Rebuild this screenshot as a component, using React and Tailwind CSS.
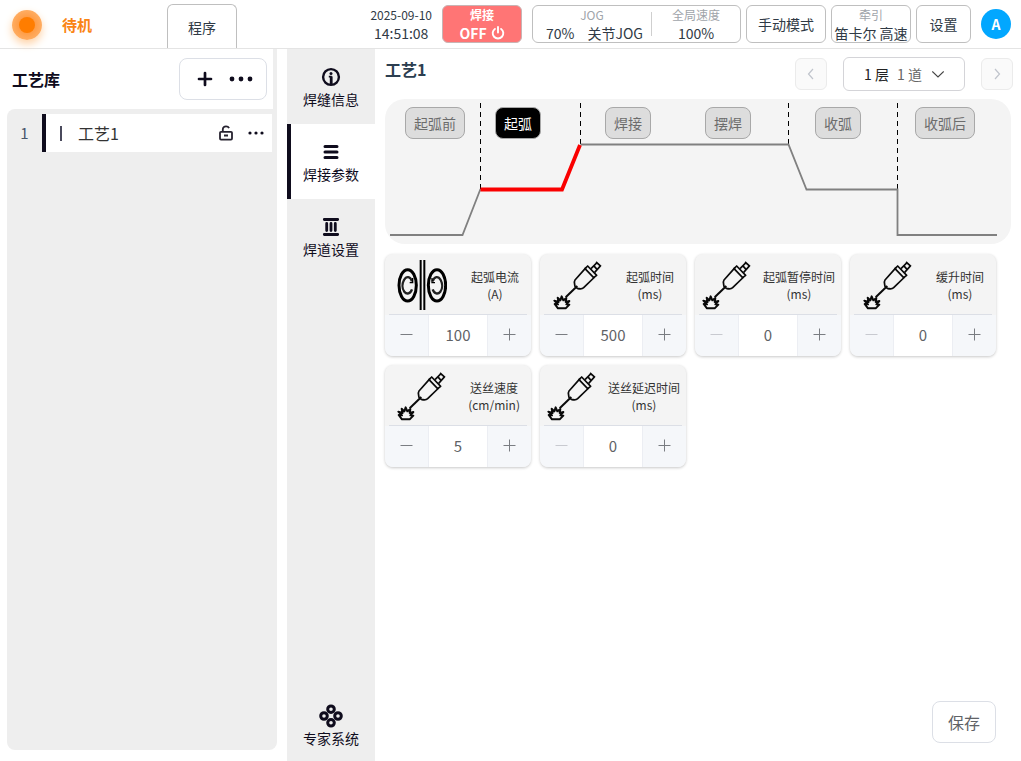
import React, { useState } from "react";

const FONT = "font-['Noto_Sans_CJK_SC',sans-serif]";

const STAGES = ["起弧前", "起弧", "焊接", "摆焊", "收弧", "收弧后"];

const PARAMS = [
	{ id: "current", name: "起弧电流", unit: "(A)", value: 100, icon: "current" },
	{ id: "time", name: "起弧时间", unit: "(ms)", value: 500, icon: "torch" },
	{ id: "pause", name: "起弧暂停时间", unit: "(ms)", value: 0, icon: "torch" },
	{ id: "rise", name: "缓升时间", unit: "(ms)", value: 0, icon: "torch" },
	{ id: "feed", name: "送丝速度", unit: "(cm/min)", value: 5, icon: "torch" },
	{ id: "delay", name: "送丝延迟时间", unit: "(ms)", value: 0, icon: "torch" },
];

function PowerIcon() {
	return (
		<svg viewBox="0 0 14 14" className="size-[14px]" fill="none" stroke="currentColor" strokeWidth="1.9" strokeLinecap="round">
			<path d="M7 1v5.500M3.900 2.900a5.300 5.300 0 1 0 6.200 0" />
		</svg>
	);
}

function DotsIcon({ className }) {
	return (
		<svg viewBox="0 0 24 6" className={className} fill="currentColor">
			<circle cx="3" cy="3" r="2.4" />
			<circle cx="12" cy="3" r="2.4" />
			<circle cx="21" cy="3" r="2.4" />
		</svg>
	);
}

function PlusIcon() {
	return (
		<svg viewBox="0 0 16 16" className="size-4" stroke="currentColor" strokeWidth="2.7" strokeLinecap="round">
			<path d="M8 2v12M2 8h12" />
		</svg>
	);
}

function LockIcon() {
	return (
		<svg viewBox="0 0 16 16" className="size-4" fill="none" stroke="currentColor" strokeWidth="1.8">
			<rect x="2" y="6.800" width="12" height="7.800" rx="1" />
			<path d="M4.800 6.800V4.500a3.200 3.200 0 0 1 3.200-3.200c1.400 0 2.500.600 3.100 1.800M6 10.500h4" />
		</svg>
	);
}

function InfoIcon() {
	return (
		<svg viewBox="0 0 20 20" className="size-5" fill="none" stroke="currentColor">
			<circle cx="10" cy="10" r="7.9" strokeWidth="2.4" />
			<circle cx="10" cy="6.4" r="1.5" fill="currentColor" stroke="none" />
			<path d="M7.8 9.6H10V18" strokeWidth="1.6" />
			<path d="M10.2 9.4V18" strokeWidth="2.8" />
		</svg>
	);
}

function ListIcon() {
	return (
		<svg viewBox="0 0 20 20" className="size-5" stroke="currentColor" strokeWidth="3" strokeLinecap="round">
			<path d="M4 4.4h12M4 10h12M4 15.6h12" />
		</svg>
	);
}

function ColumnsIcon() {
	return (
		<svg viewBox="0 0 20 20" className="size-5" stroke="currentColor" strokeLinecap="round">
			<path d="M3.3 2.5h13.4M3.3 17.5h13.4" strokeWidth="2.8" />
			<path d="M5.700 6.400v7.200M10 6.400v7.200M14.300 6.400v7.200" strokeWidth="2.8" />
		</svg>
	);
}

function ExpertIcon() {
	return (
		<svg viewBox="0 0 24 24" className="size-6" fill="none" stroke="currentColor" strokeWidth="3">
			<circle cx="12" cy="5.200" r="3.300" />
			<circle cx="5" cy="12" r="3.300" />
			<circle cx="19" cy="12" r="3.300" />
			<circle cx="12" cy="18.800" r="3.300" />
		</svg>
	);
}

function CurrentIcon() {
	return (
		<svg viewBox="0 0 150 150" className="size-[50px] shrink-0" fill="none" stroke="#000">
			<ellipse cx="32" cy="76" rx="26" ry="47" strokeWidth="9" />
			<path d="M45 64C40 48 28 48 21 60c-6 11-6 26 1 35 7 9 18 7 23-7" strokeWidth="7" stroke="#222" />
			<path d="M38 68h9V54" strokeWidth="4" />
			<path d="M71 0v150M82 0v150" strokeWidth="6" />
			<ellipse cx="120" cy="76" rx="26" ry="47" strokeWidth="9" />
			<path d="M107 64c5-16 17-16 24-4 6 11 6 26-1 35-7 9-18 7-23-7" strokeWidth="7" stroke="#222" />
			<path d="M114 68h-9V54" strokeWidth="4" />
		</svg>
	);
}

function TorchIcon() {
	return (
		<svg viewBox="0 0 150 150" className="size-[50px] shrink-0" fill="none" stroke="#0a0a0a" strokeWidth="5" strokeLinejoin="round">
			<path d="M117 26l18-18M128 37l18-20M132 6l15 13M125 17l10 11" />
			<path d="M107 18l27 28-9 7-26-27z" />
			<path d="M102 23L69 60c-4 5-1 12 0 19l7 6c7 2 14 3 19-2l33-32" />
			<path d="M76 78l-35 34" strokeWidth="6" />
			<path d="M18 145L8 132l10 1-11-11 13 4-3-13 8 8 4-12 5 12 9-7-2 12 11-3-9 10 9 1-11 11z" strokeWidth="6" />
		</svg>
	);
}

function Header() {
	return (
		<header className="flex h-[49px] shrink-0 border-b border-[#e4e4e4] bg-white text-[#303a45]">
			<div className="flex w-[167px] items-center pt-[2px] pl-3">
				<span className="flex size-[30px] items-center justify-center rounded-full bg-radial from-[#ff8a14] to-[#ffbb78] shadow-[0_4px_8px_#ffd2a5]">
					<span className="size-4 rounded-full bg-[#ff7d00]" />
				</span>
				<span className="ml-5 text-[15px] font-bold text-[#fa8514]">待机</span>
			</div>
			<button className="mt-1 w-[70px] rounded-t-md border border-b-0 border-[#bfbfbf] text-sm">程序</button>

			<div className="ml-auto flex items-center pr-[10px]">
				<div className="text-center">
					<div className="text-xs leading-[18px]">2025-09-10</div>
					<div className="text-sm leading-[18px]">14:51:08</div>
				</div>
				<button className="ml-[10px] h-[38px] w-20 rounded-md border border-[#c8b4b4] bg-[#ff7575] font-bold text-white">
					<span className="block text-xs leading-[18px]">焊接</span>
					<span className="flex items-center justify-center gap-1 text-sm leading-[18px]">
						OFF <PowerIcon />
					</span>
				</button>
				<div className="ml-[10px] flex h-[38px] w-[209px] items-center rounded-md border border-[#bfbfbf] text-center">
					<div className="w-[118px]">
						<div className="text-xs leading-[18px] text-[#a0a4aa]">JOG</div>
						<div className="flex justify-end gap-[13px] pr-2 text-sm leading-[18px]">
							<span>70%</span>
							<span>关节JOG</span>
						</div>
					</div>
					<div className="h-6 w-px bg-[#cfcfcf]" />
					<div className="flex-1">
						<div className="text-xs leading-[18px] text-[#a0a4aa]">全局速度</div>
						<div className="text-sm leading-[18px]">100%</div>
					</div>
				</div>
				<button className="ml-[5px] h-[38px] w-20 rounded-md border border-[#bfbfbf] text-sm">手动模式</button>
				<button className="ml-[5px] h-[38px] w-20 rounded-md border border-[#bfbfbf] whitespace-nowrap">
					<span className="block text-xs leading-[18px] text-[#a0a4aa]">牵引</span>
					<span className="flex justify-center text-sm leading-[18px]">笛卡尔 高速</span>
				</button>
				<button className="ml-[5px] h-[38px] w-[55px] rounded-md border border-[#bfbfbf] text-sm">设置</button>
				<button className="ml-[10px] size-[30px] rounded-full bg-[#02a7ff] text-sm font-bold text-white">A</button>
			</div>
		</header>
	);
}

function ProcessLibrary() {
	return (
		<section className="flex w-[277px] shrink-0 flex-col pb-[11px] pl-[7px]">
			<div className="flex h-[60px] items-center justify-between border-r-4 border-[#eeeeee] pr-[6px] pl-[5px]">
				<h2 className="text-base font-bold text-[#0f0c1d]">工艺库</h2>
				<div className="flex h-[42px] w-22 items-center justify-end gap-4 rounded-lg border border-[#dcdfe6] pr-[13px] text-[#0f0c1d]">
					<button aria-label="新增">
						<PlusIcon />
					</button>
					<button aria-label="更多">
						<DotsIcon className="h-[6px] w-6" />
					</button>
				</div>
			</div>
			<ul className="flex-1 rounded-l-lg rounded-br-lg bg-[#eeeeee] pt-[5px] pr-[5px]">
				<li className="flex h-[38px] items-center">
					<span className="w-[35px] text-center text-[15px] text-[#48566a]">1</span>
					<div className="flex h-full flex-1 items-center border-l-4 border-[#0f0c1d] bg-white pr-2 pl-[14px]">
						<span className="h-[15px] w-[2px] bg-[#4a4a5c]" />
						<span className="ml-4 flex-1 text-base text-[#333]">工艺1</span>
						<button aria-label="解锁" className="text-[#26222f]">
							<LockIcon />
						</button>
						<button aria-label="更多" className="ml-[14px] text-[#0f0c1d]">
							<DotsIcon className="h-1 w-4" />
						</button>
					</div>
				</li>
			</ul>
		</section>
	);
}

function NavItem({ icon, label, active, last }) {
	return (
		<button
			className={
				"flex w-full flex-col items-center justify-center border-x-4 pt-px text-sm leading-5 text-[#0f0c1d] " +
				(last ? "mt-auto h-[71px] " : "h-[75px] ") +
				(active ? "border-l-[#0f0c1d] border-r-white bg-white" : "border-transparent")
			}
		>
			<span className="flex size-6 items-center justify-center">{icon}</span>
			<span>{label}</span>
		</button>
	);
}

function SideNav() {
	return (
		<nav className="ml-[10px] flex w-[88px] shrink-0 flex-col bg-[#eeeeee]">
			<NavItem icon={<InfoIcon />} label="焊缝信息" />
			<NavItem icon={<ListIcon />} label="焊接参数" active />
			<NavItem icon={<ColumnsIcon />} label="焊道设置" />
			<NavItem icon={<ExpertIcon />} label="专家系统" last />
		</nav>
	);
}

function StageChart() {
	const [stage, setStage] = useState(1);

	return (
		<div className="relative mt-2 h-[145px] rounded-[20px] bg-[#f4f4f4]">
			<svg viewBox="0 0 626 145" className="absolute inset-0 h-[145px] w-[626px]" fill="none">
				<path d="M95.5 4v86M195.5 4v41M403.5 4v41M512.5 4v86" stroke="#000" strokeWidth="1" strokeDasharray="5 4" />
				<path d="M5 136H77.500L95.500 90M195.500 45.500H403.500L421.500 90.500H512.500V136H612" stroke="#808080" strokeWidth="1.8" />
				<path d="M95.500 90.500H177L195 46" stroke="#fa0000" strokeWidth="3.800" />
			</svg>
			<div className="relative grid grid-cols-[90px_110px_100px_110px_100px_1fr] pt-2 pl-5">
				{STAGES.map((name, i) => (
					<div key={name}>
						<button
							onClick={() => setStage(i)}
							className={
								"h-8 rounded-lg border border-[#a8a8a8] px-2 text-sm " +
								(stage === i ? "bg-black text-white" : "bg-[#dddddd] text-[#6c6c6c]")
							}
						>
							{name}
						</button>
					</div>
				))}
			</div>
		</div>
	);
}

function StepButton({ label, plus, disabled, onClick }) {
	return (
		<button
			aria-label={label}
			disabled={disabled}
			onClick={onClick}
			className="flex w-[43px] items-center justify-center bg-[#f5f7fa] pb-[2px] text-[#7a7d82] disabled:text-[#c8cad0]"
		>
			<svg viewBox="0 0 13 13" className="size-[13px]" stroke="currentColor">
				<path d={plus ? "M6.500 0.500v12M0.500 6.500h12" : "M0.500 6.500h12"} />
			</svg>
		</button>
	);
}

function ParamCard({ param }) {
	const [value, setValue] = useState(param.value);

	return (
		<div className="w-[146px] overflow-hidden rounded-lg bg-[#f4f4f4] shadow-[0_1px_3px_rgba(0,0,0,0.22)]">
			<div className="flex h-[60px] items-center justify-around pt-[2px]">
				{param.icon === "torch" ? <TorchIcon /> : <CurrentIcon />}
				<label htmlFor={param.id} className="text-center text-xs leading-[17px] text-[#333]">
					{param.name}
					<br />
					{param.unit}
				</label>
			</div>
			<div className="mx-1 border-t border-[#dcdfe6]" />
			<div className="flex h-[41px]">
				<StepButton label="减少" disabled={value <= 0} onClick={() => setValue(value - 1)} />
				<input
					id={param.id}
					value={value}
					onChange={(e) => setValue(Number(e.target.value) || 0)}
					className="w-0 flex-1 border-x border-[#eceef3] bg-white text-center text-[15px] text-[#606266] outline-none"
				/>
				<StepButton label="增加" plus onClick={() => setValue(value + 1)} />
			</div>
		</div>
	);
}

function PageButton({ label, path }) {
	return (
		<button
			aria-label={label}
			className="flex size-8 items-center justify-center rounded-md border border-[#ebebeb] bg-[#fafafa] text-[#c0c4cc]"
		>
			<svg viewBox="0 0 12 12" className="size-3" fill="none" stroke="currentColor" strokeWidth="1.2">
				<path d={path} />
			</svg>
		</button>
	);
}

function WeldParams() {
	return (
		<main className="flex flex-1 flex-col pt-2 pl-[10px]">
			<div className="flex h-[34px] items-center pr-2">
				<h1 className="flex-1 self-start text-base leading-6 font-bold text-[#2c3e50]">工艺1</h1>
				<PageButton label="上一道" path="M8 1L3.500 6 8 11" />
				<div className="mx-4 flex h-[34px] w-[122px] items-center justify-center rounded-md border border-[#d4d4d8] text-sm">
					<select aria-label="层" className="[field-sizing:content] appearance-none text-[#222] outline-none">
						<option>1 层</option>
					</select>
					<select aria-label="道" className="ml-2 [field-sizing:content] appearance-none text-[#666] outline-none">
						<option>1 道</option>
					</select>
					<svg viewBox="0 0 12 12" className="ml-[10px] size-3" fill="none" stroke="#444" strokeWidth="1.1">
						<path d="M0.300 3.500L6 9l5.700-5.500" />
					</svg>
				</div>
				<PageButton label="下一道" path="M4 1l4.500 5L4 11" />
			</div>

			<div className="flex flex-1 flex-col pr-[10px]">
				<StageChart />
				<div className="mt-[10px] flex flex-wrap gap-[9px]">
					{PARAMS.map((param) => (
						<ParamCard key={param.id} param={param} />
					))}
				</div>
				<button className="mt-auto mr-[15px] mb-[18px] h-[42px] w-16 self-end rounded-lg border border-[#dcdfe6] text-base text-[#606266]">
					保存
				</button>
			</div>
		</main>
	);
}

function App() {
	return (
		<div className={"flex min-h-screen flex-col bg-white " + FONT}>
			<Header />
			<div className="flex flex-1">
				<ProcessLibrary />
				<SideNav />
				<WeldParams />
			</div>
		</div>
	);
}

export default App;
